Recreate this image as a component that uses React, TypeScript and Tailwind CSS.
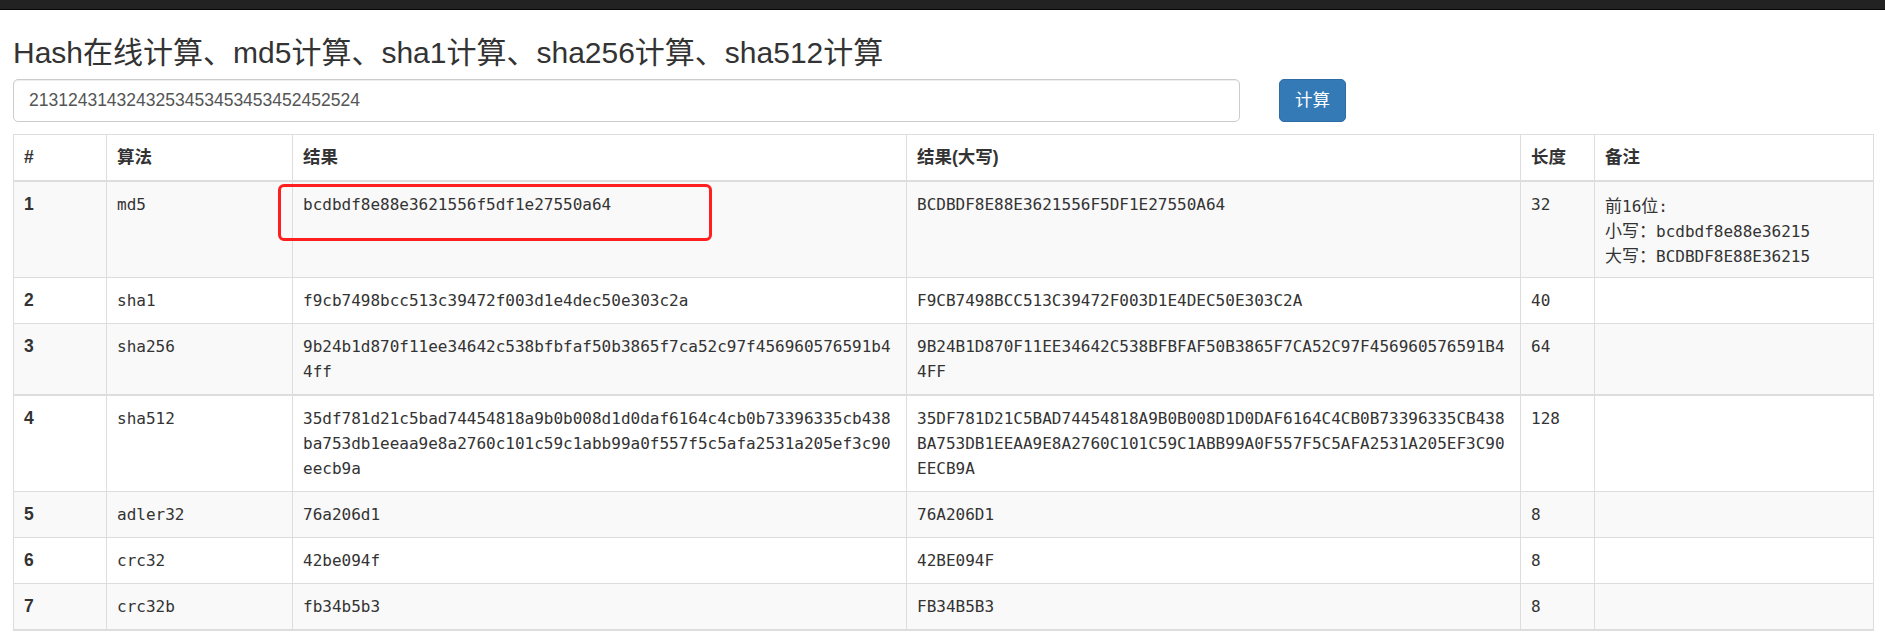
import React from 'react';

const sans = { fontFamily: '"Liberation Sans", "Noto Sans CJK SC", sans-serif' };

const rows = [
  { n: 1, algo: 'md5', hash: 'bcdbdf8e88e3621556f5df1e27550a64', len: 32 },
  { n: 2, algo: 'sha1', hash: 'f9cb7498bcc513c39472f003d1e4dec50e303c2a', len: 40 },
  { n: 3, algo: 'sha256', hash: '9b24b1d870f11ee34642c538bfbfaf50b3865f7ca52c97f456960576591b44ff', len: 64 },
  {
    n: 4,
    algo: 'sha512',
    hash: '35df781d21c5bad74454818a9b0b008d1d0daf6164c4cb0b73396335cb438ba753db1eeaa9e8a2760c101c59c1abb99a0f557f5c5afa2531a205ef3c90eecb9a',
    len: 128,
  },
  { n: 5, algo: 'adler32', hash: '76a206d1', len: 8 },
  { n: 6, algo: 'crc32', hash: '42be094f', len: 8 },
  { n: 7, algo: 'crc32b', hash: 'fb34b5b3', len: 8 },
];

const th = 'border border-[#ddd] border-b-2 px-[10px] py-[10px] text-left align-bottom font-bold';
const cell = 'border border-[#ddd] px-[10px] py-[10px] align-top';
const cjk = "font-['Noto_Sans_CJK_SC'] text-[17px]";

function Note() {
  return (
    <div>
      <div className="h-[25px] whitespace-nowrap">
        <span className={cjk}>前</span>16<span className={cjk}>位</span>:
      </div>
      <div className="h-[25px] whitespace-nowrap">
        <span className={cjk}>小写：</span>bcdbdf8e88e36215
      </div>
      <div className="h-[25px] whitespace-nowrap">
        <span className={cjk}>大写：</span>BCDBDF8E88E36215
      </div>
    </div>
  );
}

export default function App() {
  return (
    <div className="min-h-screen bg-white text-[#333]" style={sans}>
      <div className="h-[10px] bg-[#222] border-b border-[#080808]" />

      <div className="pl-[13px] pr-[12px]">
        <h2 className="mt-[26px] mb-[10px] text-[30px] leading-[33px] font-normal text-[#333]">
          Hash在线计算、md5计算、sha1计算、sha256计算、sha512计算
        </h2>

        <div className="flex items-start">
          <input
            readOnly
            value="2131243143243253453453453452452524"
            className="w-[1227px] h-[43px] flex-none rounded-[5px] border border-[#ccc] bg-white px-[15px] text-[17.5px] text-[#555] shadow-[inset_0_1px_1px_rgba(0,0,0,0.075)] outline-none"
          />
          <button className="ml-[39px] w-[67px] h-[43px] rounded-[5px] border border-[#2e6da4] bg-[#337ab7] text-[17.5px] text-white">
            计算
          </button>
        </div>

        <table className="mt-[12px] w-full table-fixed border-collapse border border-[#ddd] text-[17.5px] leading-[25px]">
          <colgroup>
            <col className="w-[93px]" />
            <col className="w-[186px]" />
            <col className="w-[614px]" />
            <col className="w-[614px]" />
            <col className="w-[74px]" />
            <col className="w-[279px]" />
          </colgroup>
          <thead>
            <tr className="bg-white">
              <th className={th}>#</th>
              <th className={th}>算法</th>
              <th className={th}>结果</th>
              <th className={th}>结果(大写)</th>
              <th className={th}>长度</th>
              <th className={th}>备注</th>
            </tr>
          </thead>
          <tbody className="font-['DejaVu_Sans_Mono','Noto_Sans_CJK_SC',monospace] text-[16px]">
            {rows.map((r) => {
              const striped = r.n % 2 === 1 ? 'bg-[#f9f9f9]' : 'bg-white';
              const thick = r.n === 3 || r.n === 7 ? 'border-b-2' : '';
              return (
                <tr key={r.n} className={striped}>
                  <th className={`${cell} ${thick} text-left font-bold text-[17.5px]`} style={sans}>
                    {r.n}
                  </th>
                  <td className={`${cell} ${thick}`}>{r.algo}</td>
                  <td className={`${cell} ${thick} break-all`}>
                    {r.n === 1 ? (
                      <div className="relative">
                        {r.hash}
                        <div className="absolute left-[-25px] top-[-8px] w-[434px] h-[57px] rounded-md border-[3px] border-[#ff1f1f]" />
                      </div>
                    ) : (
                      r.hash
                    )}
                  </td>
                  <td className={`${cell} ${thick} break-all`}>{r.hash.toUpperCase()}</td>
                  <td className={`${cell} ${thick}`}>{r.len}</td>
                  <td className={`${cell} ${thick}`}>{r.n === 1 ? <Note /> : null}</td>
                </tr>
              );
            })}
          </tbody>
        </table>
      </div>
    </div>
  );
}
